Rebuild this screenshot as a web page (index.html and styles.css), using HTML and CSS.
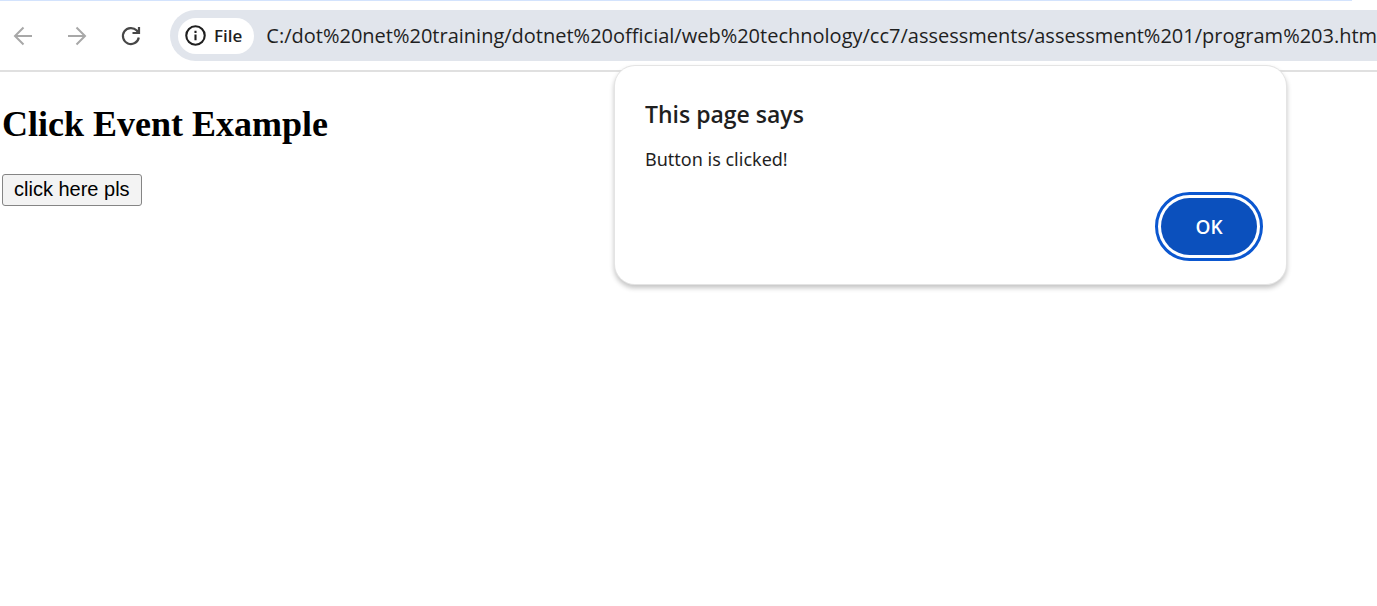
FILE: index.html
```html
<!DOCTYPE html>
<html lang="en">
<head>
<meta charset="utf-8">
<title>Click Event Example</title>
<link rel="stylesheet" href="styles.css">
</head>
<body>
<header class="browser">
  <div class="tab-strip"></div>
  <div class="toolbar">
    <nav class="nav" aria-label="Browser navigation">
      <button class="nav-button" type="button" aria-label="Back" disabled>
        <svg viewBox="0 0 22 22"><path d="M20 11H3M11.5 2.5L3 11l8.500 8.500"/></svg>
      </button>
      <button class="nav-button" type="button" aria-label="Forward" disabled>
        <svg viewBox="0 0 22 22"><path d="M2 11h17M10.500 2.500L19 11l-8.500 8.500"/></svg>
      </button>
      <button class="nav-button reload" type="button" aria-label="Reload">
        <svg viewBox="0 0 22 22"><path d="M18.800 12.500A8 8 0 1 1 16.800 5.600L19 8M19 2v6h-6.500"/><path class="solid" d="M19 4v5h-5z"/></svg>
      </button>
    </nav>
    <div class="address-bar">
      <button class="chip" type="button">
        <svg viewBox="0 0 20 20"><circle cx="10" cy="10" r="8.800"/><path d="M10 9v5.500M10 5.500v2"/></svg>
        <span>File</span>
      </button>
      <input class="url" type="text" aria-label="Address" value="C:/dot%20net%20training/dotnet%20official/web%20technology/cc7/assessments/assessment%201/program%203.html">
    </div>
  </div>
</header>

<main class="page">
  <h2 class="heading">Click Event Example</h2>
  <button class="page-button" type="button">click here pls</button>
</main>

<section class="dialog" role="alertdialog" aria-labelledby="dialog-title" aria-describedby="dialog-text">
  <h1 class="dialog-title" id="dialog-title">This page says</h1>
  <p class="dialog-text" id="dialog-text">Button is clicked!</p>
  <div class="dialog-actions">
    <button class="ok" type="button">OK</button>
  </div>
</section>
</body>
</html>
```
FILE: styles.css
```css
* {
  box-sizing: border-box;
}

body {
  margin: 0;
  background: #fff;
  overflow-x: hidden;
  font-family: "Liberation Serif", serif;
}

.browser {
  border-bottom: 2px solid #e0e0e0;
  font-family: "Open Sans", "Noto Sans", sans-serif;
}

.tab-strip {
  height: 1px;
  margin-right: 25px;
  background: #d3e3fd;
}

.toolbar {
  display: flex;
  align-items: center;
  gap: 28px;
  padding: 9px 0 9px 12px;
}

.nav {
  display: flex;
  gap: 32px;
}

.nav-button {
  display: flex;
  padding: 0;
  border: 0;
  background: none;
  color: #a8a8a8;
}

.nav-button svg {
  width: 22px;
  height: 22px;
  fill: none;
  stroke: currentColor;
  stroke-width: 2;
}

.reload {
  color: #474747;
}

.reload svg {
  stroke-width: 2.2;
}

.reload .solid {
  fill: currentColor;
  stroke: none;
}

.address-bar {
  flex: 1;
  min-width: 0;
  display: flex;
  align-items: center;
  gap: 12px;
  height: 51px;
  padding-left: 8px;
  border-radius: 26px 0 0 26px;
  background: #e1e5ec;
}

.chip {
  display: flex;
  align-items: center;
  gap: 8px;
  height: 36px;
  padding: 0 12px 0 7px;
  border: 0;
  border-radius: 18px;
  background: #fff;
  color: #1f1f1f;
  font: 600 17px "Open Sans", "Noto Sans", sans-serif;
}

.chip svg {
  width: 21px;
  height: 21px;
  fill: none;
  stroke: currentColor;
  stroke-width: 2;
}

.url {
  flex: 1;
  min-width: 0;
  height: 36px;
  padding: 0;
  border: 0;
  outline: 0;
  background: none;
  color: #1f1f1f;
  font: 20px "Open Sans", "Noto Sans", sans-serif;
}

.page {
  padding: 32px 2px;
}

.heading {
  margin: 0 0 30px;
  font-size: 36px;
  line-height: 40px;
}

.page-button {
  height: 32px;
  padding: 0 11px 2px;
  border: 1px solid #858585;
  border-radius: 3px;
  background: #f3f3f3;
  color: #000;
  font: 20px "Liberation Sans", sans-serif;
}

.dialog {
  position: absolute;
  top: 66px;
  right: 91px;
  width: 671px;
  max-width: 90%;
  padding: 32px 29px 29px 30px;
  border-radius: 20px;
  background: #fff;
  box-shadow: 0 0 0 1px #e4e4e4, 0 3px 5px 1px #c4c4c4;
  color: #1f1f1f;
  font-family: "Open Sans", "Noto Sans", sans-serif;
}

.dialog-title {
  margin: 0 0 15px;
  font-size: 23px;
  font-weight: 600;
  line-height: 32px;
}

.dialog-text {
  margin: 0 0 25px;
  font-family: "Noto Sans", sans-serif;
  font-size: 18px;
  line-height: 28px;
}

.dialog-actions {
  display: flex;
  justify-content: flex-end;
}

.ok {
  width: 96px;
  height: 57px;
  border: 0;
  border-radius: 29px;
  outline: 3px solid #0b57d0;
  outline-offset: 3px;
  background: #0b50bd;
  color: #fff;
  font: 600 19px "Open Sans", "Noto Sans", sans-serif;
}
```
